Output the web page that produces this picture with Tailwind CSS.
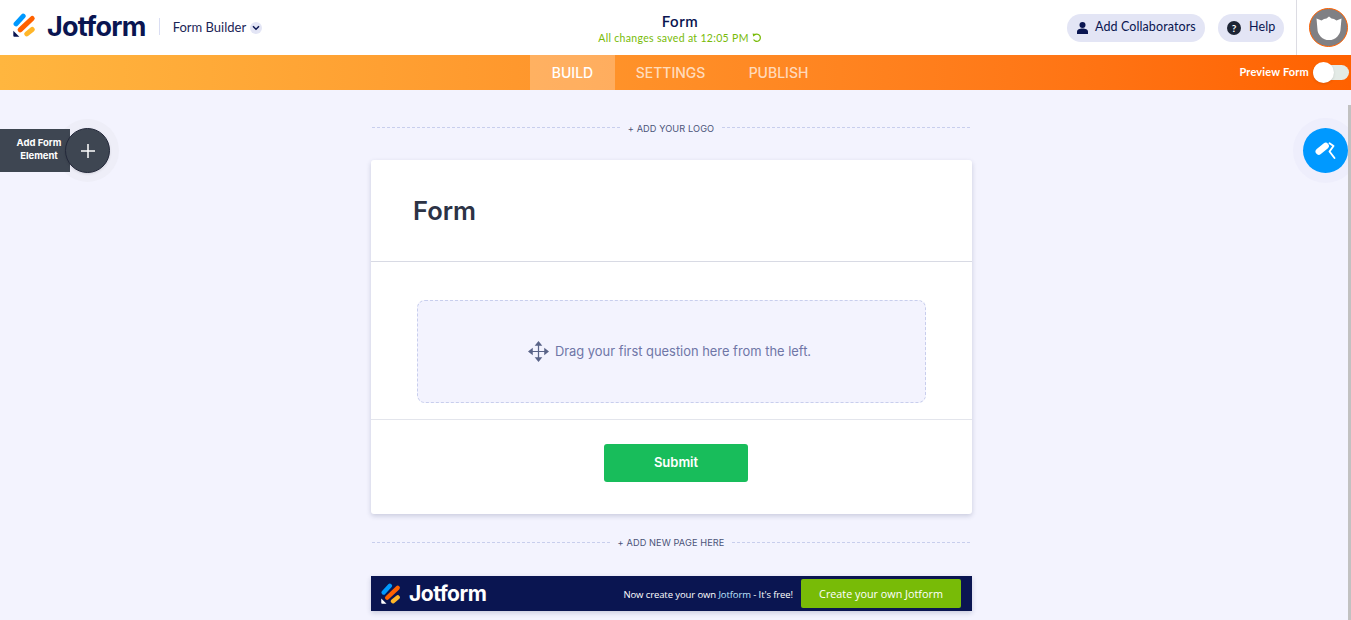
<!DOCTYPE html>
<html lang="en">
<head>
    <meta charset="UTF-8">
    <title>Form Builder - Jotform</title>
    <script src="https://cdn.jsdelivr.net/npm/@tailwindcss/browser@4"></script>
</head>
<body class="bg-[#f3f3fe] font-['Inter',sans-serif]">
    <div class="relative w-[1351px] h-[620px] overflow-hidden">
        <!-- top bar -->
        <header class="relative h-[55px] bg-white flex items-center justify-between text-[#0a1551]">
            <div class="flex items-center pl-[13px]">
                <svg class="mt-[-5px]" width="23" height="24" viewBox="0 0 23 24" fill="none" stroke-width="5" stroke-linecap="round">
                    <path d="M3.1 10.9 L10.2 3.1" stroke="#0099ff"/>
                    <path d="M7.1 16.9 L19.2 5.5" stroke="#ff6100"/>
                    <path d="M13.8 20.9 L19.2 16.5" stroke="#ffb629"/>
                    <path d="M0.3 17.7 L6.3 23.7 H1.3 Q0.3 23.7 0.3 22.7 Z" fill="#0a1551"/>
                </svg>
                <span class="ml-[11px] mt-[-2px] text-[27px] leading-none font-bold tracking-[-0.75px]">Jotform</span>
                <div class="ml-[13px] mt-[-2px] w-px h-[17px] bg-[#dadef3]"></div>
                <span class="ml-[13px] text-[13px] font-['Lato',sans-serif] text-[#1b2556]">Form Builder</span>
                <span class="ml-[4px] w-3 h-3 rounded-full bg-[#e3e5f5] flex items-center justify-center">
                    <svg width="8" height="6" viewBox="0 0 8 6"><path d="M1 1.2 L4 4.2 L7 1.2" fill="none" stroke="#0a1551" stroke-width="1.5"/></svg>
                </span>
            </div>
            <div class="absolute left-[530px] w-[300px] top-[12px] flex flex-col items-center">
                <span class="text-[15px] leading-[19px] font-semibold font-['Lato',sans-serif] tracking-[0.5px]">Form</span>
                <div class="flex items-center text-[10.5px] leading-[14px] text-[#78bb07] font-['Lato',sans-serif] tracking-[0.32px]">
                    All changes saved at 12:05 PM
                    <svg class="ml-[3px]" width="10" height="10" viewBox="0 0 10 10"><path d="M2.2 2.2 A3.6 3.6 0 1 1 1.6 6.5" fill="none" stroke="#78bb07" stroke-width="1.3"/><path d="M0.6 0.6 L3.9 0.9 L1.2 3.7 Z" fill="#78bb07"/></svg>
                </div>
            </div>
            <div class="flex items-center h-full">
                <button class="h-7 w-[138px] rounded-full bg-[#e3e5f5] flex items-center pl-[10px] text-[12.5px] font-['Lato',sans-serif] tracking-[0.1px]">
                    <svg width="11" height="12" viewBox="0 0 11 12" fill="#0a1551"><circle cx="5.5" cy="3" r="3"/><path d="M0 12 V10 C0 7.5 2.5 6.6 5.5 6.6 C8.5 6.6 11 7.5 11 10 V12 Z"/></svg>
                    <span class="ml-[7px]">Add Collaborators</span>
                </button>
                <button class="ml-[13px] h-7 w-[66px] rounded-full bg-[#e3e5f5] flex items-center pl-[9px] text-[12.5px] font-['Lato',sans-serif] tracking-[0.1px]">
                    <span class="w-[14px] h-[14px] rounded-full bg-[#1c2434] text-white text-[10px] font-bold leading-[14px] text-center">?</span>
                    <span class="ml-[8px]">Help</span>
                </button>
                <div class="ml-[12px] w-[55px] h-full border-l border-[#dcdce3] flex items-center pl-[12px]">
                    <div class="w-[39px] h-[39px] rounded-full bg-[#808084] border border-[#ff6100] flex items-center justify-center">
                        <svg width="26" height="24" viewBox="0 0 26 24"><path d="M0.5 2.5 L5.5 4.5 Q8 2.8 10.5 2.6 L13 0.5 L15.5 2.6 Q18 2.8 20.5 4.5 L25.5 2.5 L24.6 12.5 A11.6 11.5 0 0 1 1.4 12.5 Z" fill="#fff"/></svg>
                    </div>
                </div>
            </div>
        </header>

        <!-- build / settings / publish -->
        <nav class="relative h-[35px] bg-gradient-to-r from-[#ffb63f] to-[#ff6100] flex justify-center text-[14px] font-medium">
            <div class="ml-[9px] flex">
                <a class="w-[85px] bg-white/25 text-white flex items-center justify-center pl-[1px]">BUILD</a>
                <a class="w-[112px] text-white/70 flex items-center justify-center">SETTINGS</a>
                <a class="w-[104px] text-white/70 flex items-center justify-center">PUBLISH</a>
            </div>
            <div class="absolute right-[2px] top-0 h-full flex items-center">
                <span class="text-white text-[11px] font-bold font-['Lato',sans-serif] mr-[4px] tracking-[0.18px]">Preview Form</span>
                <div class="relative w-[36px] h-[15px] rounded-full bg-[#e3eae6]">
                    <div class="absolute left-0 top-[-3px] w-[21px] h-[21px] rounded-full bg-white shadow"></div>
                </div>
            </div>
        </nav>

        <!-- form canvas -->
        <main class="w-[601px] ml-[371px]">
            <div class="h-[70px] flex items-center pb-[8px] pt-[13px] text-[9.2px] text-[#4c5479] tracking-[0.1px]">
                <div class="flex-1 ml-[1px] border-t border-dashed border-[#c8ceed]"></div>
                <span class="mx-[8px] mt-[3px]">+ ADD YOUR LOGO</span>
                <div class="flex-1 mr-[2px] border-t border-dashed border-[#c8ceed]"></div>
            </div>
            <section class="bg-white rounded-[3px] shadow-[0_2px_5px_rgba(37,45,91,0.2)]">
                <div class="h-[102px] border-b border-[#d8dae4] pl-[42px] pt-[35px]">
                    <h1 class="text-[25.5px] leading-[32px] font-semibold text-[#2c3345]">Form</h1>
                </div>
                <div class="h-[158px] border-b border-[#e3e5ec] pt-[38px] px-[46px]">
                    <div class="h-[103px] w-[509px] pr-[4px] rounded-[8px] border border-dashed border-[#c8ceed] bg-[#f3f3fe] flex items-center justify-center text-[12.9px] text-[#6f76a7]">
                        <svg class="mr-[6px]" width="21" height="21" viewBox="0 0 22 22" fill="#5a6488">
                            <path d="M11 0 L15 5 H7 Z M11 22 L7 17 H15 Z M0 11 L5 7 V15 Z M22 11 L17 15 V7 Z"/>
                            <path d="M11 4 V18 M4 11 H18" stroke="#5a6488" stroke-width="1.3"/>
                        </svg>
                        Drag your first question here from the left.
                    </div>
                </div>
                <div class="h-[94px] pt-[24px] pl-[233px]">
                    <button class="w-[144px] h-[38px] rounded-[3px] bg-[#18bd5b] text-white text-[13px] font-semibold">Submit</button>
                </div>
            </section>
            <div class="h-[62px] pb-[5px] flex items-center text-[9.2px] text-[#4c5479] tracking-[0.1px]">
                <div class="flex-1 ml-[1px] border-t border-dashed border-[#c8ceed]"></div>
                <span class="mx-[8px]">+ ADD NEW PAGE HERE</span>
                <div class="flex-1 mr-[2px] border-t border-dashed border-[#c8ceed]"></div>
            </div>
            <div class="h-[35px] bg-[#0a1551] shadow-[0_2px_5px_rgba(37,45,91,0.2)] flex items-center pl-[10px] pr-[11px] text-white">
                <svg width="20" height="21" viewBox="0 0 23 24" fill="none" stroke-width="5" stroke-linecap="round">
                    <path d="M3.1 10.9 L10.2 3.1" stroke="#0099ff"/>
                    <path d="M7.1 16.9 L19.2 5.5" stroke="#ff6100"/>
                    <path d="M13.8 20.9 L19.2 16.5" stroke="#ffb629"/>
                    <path d="M0.3 17.7 L6.3 23.7 H1.3 Q0.3 23.7 0.3 22.7 Z" fill="#fff"/>
                </svg>
                <span class="ml-[8px] text-[21px] font-bold leading-none tracking-[-0.5px]">Jotform</span>
                <span class="ml-auto text-[9.5px] tracking-[-0.1px] font-['Open_Sans',sans-serif] pt-[3px]">Now create your own <span class="text-[#bfe6ff]">Jotform</span> - It's free!</span>
                <button class="ml-[8px] w-[160px] h-[29px] pt-[1px] rounded-[2px] bg-[#78bb07] text-[10.8px] font-['Open_Sans',sans-serif]">Create your own Jotform</button>
            </div>
        </main>

        <!-- floating buttons -->
        <div class="absolute left-[56px] top-[119px] w-[63px] h-[63px] rounded-full bg-[#eeeef8]"></div>
        <div class="absolute left-0 top-[129px] w-[70px] h-[43px] pb-[4px] bg-[#3e4652] text-white text-[9.5px] leading-[13px] font-bold text-center flex items-center pl-[15px]">
            <span class="w-[48px]">Add Form Element</span>
        </div>
        <div class="absolute left-[65px] top-[128px] w-[45px] h-[45px] rounded-full bg-[#3e4652] border border-[#23283a] shadow flex items-center justify-center">
            <svg width="16" height="16" viewBox="0 0 16 16"><path d="M8 1 V15 M1 8 H15" stroke="#fff" stroke-width="1.5"/></svg>
        </div>

        <div class="absolute left-[1293px] top-[118px] w-[65px] h-[65px] rounded-full bg-[#eeeefc]"></div>
        <div class="absolute left-[1303px] top-[128px] w-[45px] h-[45px] rounded-full bg-[#0099ff] flex items-center justify-center">
            <svg width="22" height="20" viewBox="0 0 22 20" fill="none">
                <path d="M3.8 10.5 L10.6 5" stroke="#fff" stroke-width="6.5" stroke-linecap="round"/>
                <path d="M14.5 2.2 L18.5 5 L14.5 10.5 L19.5 17" stroke="#fff" stroke-width="1.9" stroke-linecap="round" stroke-linejoin="round"/>
            </svg>
        </div>

        <!-- page scrollbar -->
        <div class="absolute right-0 top-[105px] bottom-0 w-[3px] bg-[#c1c1c1]"></div>
    </div>
</body>
</html>
